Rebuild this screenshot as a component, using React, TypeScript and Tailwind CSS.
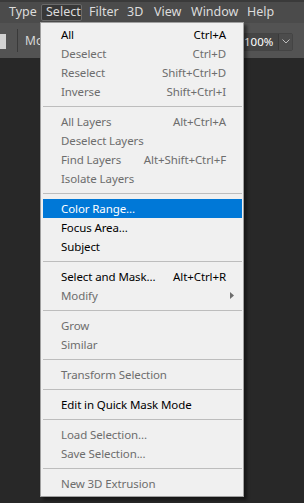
import React from "react";

type Item =
  | { type: "sep" }
  | { type: "item"; label: string; sc?: string; on?: boolean; hi?: boolean; sub?: boolean };

const items: Item[] = [
  { type: "item", label: "All", sc: "Ctrl+A", on: true },
  { type: "item", label: "Deselect", sc: "Ctrl+D" },
  { type: "item", label: "Reselect", sc: "Shift+Ctrl+D" },
  { type: "item", label: "Inverse", sc: "Shift+Ctrl+I" },
  { type: "sep" },
  { type: "item", label: "All Layers", sc: "Alt+Ctrl+A" },
  { type: "item", label: "Deselect Layers" },
  { type: "item", label: "Find Layers", sc: "Alt+Shift+Ctrl+F" },
  { type: "item", label: "Isolate Layers" },
  { type: "sep" },
  { type: "item", label: "Color Range...", on: true, hi: true },
  { type: "item", label: "Focus Area...", on: true },
  { type: "item", label: "Subject", on: true },
  { type: "sep" },
  { type: "item", label: "Select and Mask...", sc: "Alt+Ctrl+R", on: true },
  { type: "item", label: "Modify", sub: true },
  { type: "sep" },
  { type: "item", label: "Grow" },
  { type: "item", label: "Similar" },
  { type: "sep" },
  { type: "item", label: "Transform Selection" },
  { type: "sep" },
  { type: "item", label: "Edit in Quick Mask Mode", on: true },
  { type: "sep" },
  { type: "item", label: "Load Selection..." },
  { type: "item", label: "Save Selection..." },
  { type: "sep" },
  { type: "item", label: "New 3D Extrusion" },
];

export default function App() {
  return (
    <div
      className="relative w-[304px] h-[503px] overflow-hidden bg-[#282828] text-[12px]"
      style={{ fontFamily: '"Noto Sans", "Open Sans", sans-serif' }}
    >
      {/* menu bar */}
      <div className="h-[23px] bg-[#4b4b4b] border-t-[2px] border-[#3a3a3a] flex items-center pl-[9px] text-[#dcdcdc] text-[12.5px]">
        <div className="w-[32px]">Type</div>
        <div className="w-[41px] h-[17px] pl-[4px] flex items-center bg-[#383838] border border-[#6a6a6a] rounded-[2px]">
          Select
        </div>
        <div className="w-[38px] ml-[7px]">Filter</div>
        <div className="w-[27px]">3D</div>
        <div className="w-[37px]">View</div>
        <div className="w-[56px]">Window</div>
        <div>Help</div>
      </div>
      {/* options bar */}
      <div className="h-[35px] bg-[#535353] flex items-center relative">
        <div className="w-[6px] h-[15px] bg-[#d2d2d2] mt-[2px]" />
        <div className="w-px h-[23px] bg-[#3a3a3a] ml-[11px]" />
        <div className="ml-[7px] text-[#d8d8d8] text-[12px]">Mode</div>
        <div className="ml-auto mr-[11px] flex h-[18px] mt-[2px] border border-[#444] rounded-[2px] overflow-hidden">
          <div className="w-[36px] bg-[#454545] text-white text-[11.5px] flex items-center pl-[2px]">100%</div>
          <div className="w-[14px] bg-[#4c4c4c] border-l border-[#3a3a3a] flex items-center justify-center">
            <svg width="8" height="5" viewBox="0 0 8 5">
              <path d="M0.5 0.5 L4 4 L7.5 0.5" stroke="#bdbdbd" fill="none" strokeWidth="1" />
            </svg>
          </div>
        </div>
      </div>

      {/* dropdown menu */}
      <div className="absolute left-[40px] top-[22px] w-[204px] bg-[#f0f0f0] border border-[#a0a0a0] pt-[2px] pb-[3px] pl-[2px] pr-[1px] shadow-[3px_3px_3px_rgba(0,0,0,0.45)] text-[11.5px] tracking-[-0.1px]">
        {items.map((it, i) =>
          it.type === "sep" ? (
            <div key={i} className="h-[11px] flex items-center">
              <div className="h-px w-full bg-[#bdbdbd]" />
            </div>
          ) : (
            <div
              key={i}
              className={
                "h-[19px] flex items-center pl-[18px] pr-[16px] relative " +
                (it.hi ? "bg-[#0078d7] text-white" : it.on ? "text-[#000]" : "text-[#6d6d6d]")
              }
            >
              <span className="whitespace-nowrap">{it.label}</span>
              {it.sc && <span className="ml-auto whitespace-nowrap">{it.sc}</span>}
              {it.sub && (
                <svg className="absolute right-[8px] top-[6px]" width="4" height="7" viewBox="0 0 4 7">
                  <path d="M0 0 L4 3.5 L0 7 Z" fill="#6d6d6d" />
                </svg>
              )}
            </div>
          )
        )}
      </div>
    </div>
  );
}
